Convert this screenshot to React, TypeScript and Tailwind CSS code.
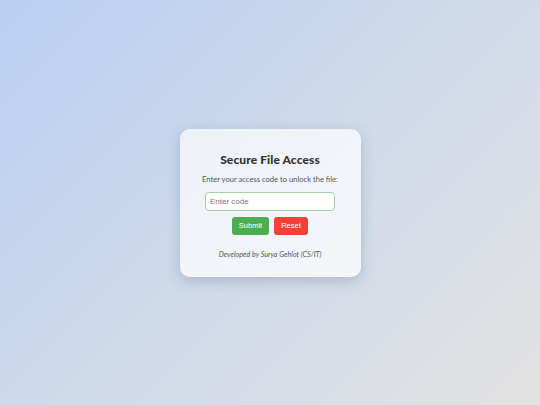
import React, { useState } from 'react'

export default function App() {
  const [code, setCode] = useState('')

  return (
    <div className="min-h-screen w-full flex items-center justify-center bg-[linear-gradient(135deg,#bacff3_0%,#cfdaea_50%,#e3e2e2_100%)] font-['Lato','Inter',sans-serif]">
      <div className="w-[181px] h-[148px] rounded-[10px] bg-[linear-gradient(135deg,#eef2f8,#f4f6fa)] shadow-[0_4px_14px_rgba(60,80,120,0.25)] flex flex-col items-center pt-[25px]">
        <h1 className="text-[12px] font-black text-[#333] leading-none tracking-[0.1px]">Secure File Access</h1>
        <p className="mt-[10px] text-[7.6px] text-[#555] leading-none">Enter your access code to unlock the file:</p>
        <input
          value={code}
          onChange={(e) => setCode(e.target.value)}
          placeholder="Enter code"
          className="mt-[9px] w-[130px] h-[19px] rounded-[4px] border border-[#9fd3a6] bg-white px-[4px] text-[8px] font-['Liberation_Sans',Arial,sans-serif] text-[#333] placeholder:text-[#777] outline-none"
        />
        <div className="mt-[6px] flex gap-[5px]">
          <button className="w-[37px] h-[18px] rounded-[3px] bg-[#4cae4f] text-white text-[7.5px] font-['Liberation_Sans',Arial,sans-serif]">Submit</button>
          <button className="w-[34px] h-[18px] rounded-[3px] bg-[#f34235] text-white text-[7.5px] font-['Liberation_Sans',Arial,sans-serif]">Reset</button>
        </div>
        <p className="mt-[16px] text-[7.2px] italic text-[#555] leading-none">Developed by Surya Gehlot (CS/IT)</p>
      </div>
    </div>
  )
}
